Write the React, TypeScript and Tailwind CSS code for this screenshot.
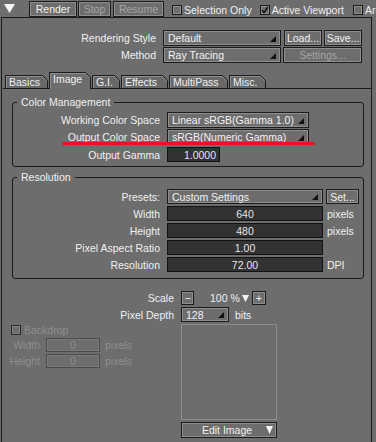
import React from "react";

// render settings panel, Image tab

const bevel = "border border-[#1c1c1c] shadow-[inset_0_0_0_1px_#8e8e8e]";

function Button({ label, className = "", dim = false }: { label: string; className?: string; dim?: boolean }) {
  return (
    <div
      className={`shrink-0 flex items-center justify-center whitespace-nowrap ${bevel} ${dim ? "text-[#a4a4a4]" : "text-[#f2f2f2]"} ${className}`}
    >
      {label}
    </div>
  );
}

function Dropdown({ text, className = "" }: { text: string; className?: string }) {
  return (
    <div className={`shrink-0 flex items-center pl-[4px] text-[#f2f2f2] ${bevel} ${className}`}>
      <span className="flex-1 whitespace-nowrap overflow-hidden">{text}</span>
      <svg width="6" height="6" className="self-end mb-[3px] mr-[4px] shrink-0">
        <polygon points="6,0 6,6 0,6" fill="#111" />
      </svg>
    </div>
  );
}

function Field({ text, className = "", right = false }: { text: string; className?: string; right?: boolean }) {
  return (
    <div
      className={`shrink-0 flex items-center bg-[#323232] border border-[#121212] text-[#e6e6e6] ${right ? "justify-end pr-[3px]" : "justify-center"} ${className}`}
    >
      {text}
    </div>
  );
}

function Checkbox({ checked = false, dim = false }: { checked?: boolean; dim?: boolean }) {
  return (
    <div
      className={`w-[10px] h-[10px] shrink-0 border flex items-center justify-center ${dim ? "border-[#2a2a2a] shadow-[inset_0_0_0_1px_#808080]" : "border-[#1c1c1c] shadow-[inset_0_0_0_1px_#909090]"}`}
    >
      {checked && (
        <svg width="8" height="8" viewBox="0 0 8 8">
          <polyline points="1,4 3,6.5 7,1" fill="none" stroke="#111" strokeWidth="1.4" />
        </svg>
      )}
    </div>
  );
}

function Tab({ label, active = false, className = "" }: { label: string; active?: boolean; className?: string }) {
  const h = active ? 17 : 13;
  const bg = active ? "#6d6d6d" : "#686868";
  return (
    <div className={`shrink-0 flex ${active ? "h-[17px] z-10 -mb-px" : "h-[13px]"} ${className}`}>
      <div
        className={`flex-1 flex pl-[3px] border-l border-t border-[#1c1c1c] shadow-[inset_1px_1px_0_#8e8e8e] ${active ? "bg-[#6d6d6d] items-start pt-[1px]" : "bg-[#686868] items-center"}`}
      >
        <span className="whitespace-nowrap leading-none">{label}</span>
      </div>
      <svg width="6" height={h} className="shrink-0">
        <polygon points={`0,0 0.5,0 6,5.5 6,${h} 0,${h}`} fill={bg} />
        <polyline points={`0,0.5 0.5,0.5 5.5,5.5 5.5,${h}`} fill="none" stroke="#1c1c1c" />
        <polyline points="0,1.5 0.1,1.5 4.5,5.9" fill="none" stroke="#8e8e8e" />
      </svg>
    </div>
  );
}

export default function App() {
  return (
    <div className="w-[376px] h-[442px] overflow-hidden bg-[#6d6d6d] font-['Liberation_Sans',Arial,sans-serif] text-[10.5px] leading-[12px] text-[#f0f0f0] flex flex-col">
      {/* top toolbar */}
      <div className="h-[17px] shrink-0 flex items-start pt-[1px] overflow-hidden">
        <svg width="11" height="9" className="ml-[4px] mt-[3px] shrink-0">
          <polygon points="0,0 11,0 5.5,9" fill="#f4f4f4" />
        </svg>
        <Button label="Render" className="ml-[14px] w-[48px] h-[16px]" />
        <Button label="Stop" dim className="ml-[1px] w-[33px] h-[16px]" />
        <Button label="Resume" dim className="ml-[2px] w-[51px] h-[16px]" />
        <div className="shrink-0 ml-[8px] mt-[3px] flex items-center gap-[2px]">
          <Checkbox />
          <span className="whitespace-nowrap">Selection Only</span>
        </div>
        <div className="shrink-0 ml-[8px] mt-[3px] flex items-center gap-[2px]">
          <Checkbox checked />
          <span className="whitespace-nowrap">Active Viewport</span>
        </div>
        <div className="shrink-0 ml-[9px] mt-[3px] flex items-center gap-[2px]">
          <Checkbox />
          <span className="whitespace-nowrap">Area</span>
        </div>
      </div>

      {/* main panel */}
      <div className="ml-[1px] w-[371px] flex-1 border-l border-t border-r border-[#1c1c1c] flex flex-col">
        {/* rendering style / method */}
        <div className="mt-[12px] flex items-center h-[16px]">
          <div className="w-[154px] shrink-0 text-right whitespace-nowrap">Rendering Style</div>
          <Dropdown text="Default" className="ml-[7px] w-[118px] h-[16px]" />
          <Button label="Load..." className="ml-[3px] w-[38px] h-[16px]" />
          <Button label="Save..." className="ml-[2px] w-[38px] h-[16px]" />
        </div>
        <div className="mt-[1px] flex items-center h-[16px]">
          <div className="w-[154px] shrink-0 text-right whitespace-nowrap">Method</div>
          <Dropdown text="Ray Tracing" className="ml-[7px] w-[118px] h-[16px]" />
          <Button label="Settings..." dim className="ml-[2px] w-[79px] h-[16px]" />
        </div>

        {/* tabs */}
        <div className="mt-[9px] ml-[1px] h-[17px] flex items-end border-b border-[#1c1c1c]">
          <div className="ml-[2px] flex items-end">
            <Tab label="Basics" className="w-[43px]" />
            <Tab label="Image" active className="w-[42px] ml-[1px]" />
            <Tab label="G.I." className="w-[28px] ml-[1px]" />
            <Tab label="Effects" className="w-[47px] ml-[1px]" />
            <Tab label="MultiPass" className="w-[59px] ml-[1px]" />
            <Tab label="Misc." className="w-[37px] ml-[1px]" />
          </div>
        </div>

        {/* Color Management */}
        <fieldset className="mt-[7px] ml-[10px] w-[352px] border border-[#1c1c1c] rounded-[3px] px-0 pb-[4px]">
          <legend className="ml-[4px] px-[4px] leading-[12px]">Color Management</legend>
          <div className="mt-[4px] flex items-center h-[16px]">
            <div className="w-[147px] shrink-0 text-right whitespace-nowrap">Working Color Space</div>
            <Dropdown text="Linear sRGB(Gamma 1.0)" className="ml-[7px] w-[142px] h-[16px]" />
          </div>
          <div className="relative mt-[1px] flex items-center h-[16px]">
            <div className="w-[147px] shrink-0 text-right whitespace-nowrap">Output Color Space</div>
            <Dropdown text="sRGB(Numeric Gamma)" className="ml-[7px] w-[142px] h-[16px]" />
            {/* red annotation stroke */}
            <div className="absolute left-[49px] top-[13px] w-[253px] h-[3px] rounded-full bg-[#e2161d]" />
          </div>
          <div className="mt-[2px] flex items-center h-[15px]">
            <div className="w-[147px] shrink-0 text-right whitespace-nowrap">Output Gamma</div>
            <Field text="1.0000" right className="ml-[7px] w-[53px] h-[15px]" />
          </div>
        </fieldset>

        {/* Resolution */}
        <fieldset className="mt-[4px] ml-[10px] w-[352px] border border-[#1c1c1c] rounded-[3px] px-0 pb-[6px]">
          <legend className="ml-[4px] px-[4px] leading-[12px]">Resolution</legend>
          <div className="mt-[6px] flex items-center h-[15px]">
            <div className="w-[147px] shrink-0 text-right whitespace-nowrap">Presets:</div>
            <Dropdown text="Custom Settings" className="ml-[7px] w-[156px] h-[15px]" />
            <Button label="Set..." className="ml-[3px] w-[33px] h-[15px]" />
          </div>
          {[
            ["Width", "640", "pixels"],
            ["Height", "480", "pixels"],
            ["Pixel Aspect Ratio", "1.00", ""],
            ["Resolution", "72.00", "DPI"],
          ].map(([label, value, unit]) => (
            <div key={label} className="mt-[2px] flex items-center h-[15px]">
              <div className="w-[147px] shrink-0 text-right whitespace-nowrap">{label}</div>
              <Field text={value} className="ml-[7px] w-[156px] h-[15px]" />
              <span className="ml-[4px]">{unit}</span>
            </div>
          ))}
        </fieldset>

        {/* scale / depth / preview */}
        <div className="mt-[12px] grid grid-cols-[179px_auto]">
          <div className="h-[14px] flex items-center justify-end pr-[7px]">Scale</div>
          <div className="h-[14px] flex items-center">
            <Button label="−" className="w-[13px] h-[14px] text-[#bdbdbd]" />
            <span className="ml-[16px]">100 %</span>
            <svg width="7" height="7" className="ml-[2px]">
              <polygon points="0,0 7,0 3.5,7" fill="#f4f4f4" />
            </svg>
            <Button label="+" className="ml-[3px] w-[14px] h-[14px] text-[#bdbdbd]" />
          </div>

          <div className="mt-[2px] h-[15px] flex items-center justify-end pr-[7px]">Pixel Depth</div>
          <div className="mt-[2px] h-[15px] flex items-center">
            <Dropdown text="128" className="w-[48px] h-[15px]" />
            <span className="ml-[6px]">bits</span>
          </div>

          <div className="mt-[3px] pl-[9px] flex flex-col text-[#8e8e8e]">
            <div className="flex items-center gap-[3px] h-[10px]">
              <Checkbox dim />
              <span>Backdrop</span>
            </div>
            {[
              ["Width", "mt-[3px]"],
              ["Height", "mt-[2px]"],
            ].map(([label, mt]) => (
              <div key={label} className={`${mt} -ml-[9px] flex items-center h-[14px]`}>
                <div className="w-[38px] text-right">{label}</div>
                <div className="ml-[6px] w-[54px] h-[14px] flex items-center justify-center border border-[#4c4c4c] shadow-[inset_0_0_0_1px_#7a7a7a]">
                  0
                </div>
                <span className="ml-[5px]">pixels</span>
              </div>
            ))}
          </div>
          <div className="mt-[2px] flex flex-col">
            <div className="w-[96px] h-[96px] border border-[#8c8c8c]" />
            <div className={`mt-[2px] w-[96px] h-[16px] flex items-center ${bevel}`}>
              <span className="flex-1 text-center pl-[6px]">Edit Image</span>
              <svg width="7" height="8" className="mr-[3px]">
                <polygon points="0,0 7,0 3.5,8" fill="#f4f4f4" />
              </svg>
            </div>
          </div>
        </div>
      </div>
    </div>
  );
}
